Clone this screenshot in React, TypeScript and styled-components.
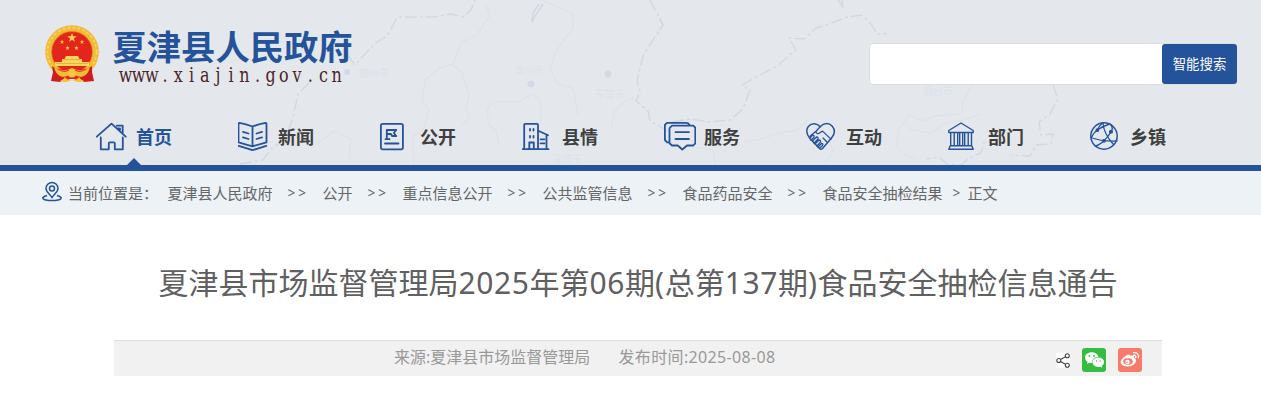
import React from "react"
import styled, { createGlobalStyle } from "styled-components"

const BLUE = "#24539b"

const GlobalStyle = createGlobalStyle`
  * {
    box-sizing: border-box;
  }

  body {
    margin: 0;
    background: #fff;
    color: #666;
    font-family: "Noto Sans", "Noto Sans CJK SC", sans-serif;
  }

  a {
    color: inherit;
    text-decoration: none;
  }
`

const Header = styled.header`
  position: relative;
  height: 171px;
  background: #e4e8ed;
  border-bottom: 6px solid ${BLUE};
`

const MapBackground = styled.svg`
  position: absolute;
  top: 0;
  left: 0;
  width: 1261px;
  height: 165px;
  fill: none;
  stroke: #d2d8e2;
  stroke-width: 1.4;
  stroke-linejoin: round;

  .road {
    stroke: #dde1e7;
    stroke-width: 1.1;
  }

  text,
  circle {
    fill: #d3d9e5;
    stroke: none;
    font-family: "Noto Sans CJK SC", sans-serif;
    font-size: 10px;
  }
`

const TopRow = styled.div`
  position: relative;
  display: flex;
  justify-content: space-between;
  height: 107px;
  padding: 24px 24px 0 44px;
`

const Brand = styled.a`
  display: flex;
  height: 64px;
`

const SiteName = styled.svg`
  width: 250px;
  height: 64px;
  margin-left: 12px;
  overflow: visible;
`

const Search = styled.form`
  display: flex;
  width: 368px;
  height: 42px;
  margin-top: 19px;
  border: 1px solid #dcdcdc;
  border-right: none;
  border-radius: 4px;
  background: #fff;

  input {
    flex: 1;
    min-width: 0;
    border: none;
    border-radius: 4px;
    background: #fff;
    outline: none;
  }

  button {
    width: 75px;
    height: 40px;
    padding: 0 0 2px;
    border: none;
    border-radius: 3px;
    background: ${BLUE};
    color: #fff;
    font-family: "Noto Sans CJK SC", sans-serif;
    font-size: 13.4px;
    cursor: pointer;
  }
`

const Nav = styled.nav`
  position: relative;
  display: grid;
  grid-template-columns: repeat(8, 142px);
  height: 58px;
  padding-left: 96px;
`

const NavItem = styled.a<{ $active?: boolean }>`
  position: relative;
  display: flex;
  align-items: center;
  height: 58px;
  color: ${(p) => (p.$active ? BLUE : "#3f3f3f")};
  font-size: 18px;
  font-weight: bold;

  svg {
    width: 32px;
    height: 32px;
    margin: 0 8px 0 0;
    fill: none;
    stroke: ${BLUE};
    stroke-width: 1.8;
    stroke-linecap: round;
    stroke-linejoin: round;
  }

  &::after {
    display: ${(p) => (p.$active ? "block" : "none")};
    content: "";
    position: absolute;
    left: 31px;
    bottom: 0;
    border: 7px solid transparent;
    border-top: none;
    border-bottom-color: ${BLUE};
  }
`

const Breadcrumb = styled.div`
  display: flex;
  align-items: center;
  height: 44px;
  padding: 0 0 2px 42px;
  background: #edf2f6;
  font-size: 15px;
  white-space: nowrap;

  svg {
    width: 20px;
    height: 22px;
    margin: -1px 6px 0 0;
    fill: none;
    stroke: ${BLUE};
    stroke-width: 1.5;
  }
`

const CrumbLabel = styled.span`
  width: 99.5px;
`

const Separator = styled.span`
  width: 50px;
  padding: 2px 0 0 15px;
  font-size: 13.5px;
  letter-spacing: 3px;
`

const LastSeparator = styled(Separator)`
  width: 25px;
  padding-left: 10px;
`

const Article = styled.main`
  width: 1048px;
  margin: 0 0 0 114px;
`

const Title = styled.h1`
  margin: 0;
  padding-top: 46px;
  height: 125px;
  color: #606060;
  font-size: 30px;
  font-weight: normal;
  line-height: 44px;
  text-align: center;
  white-space: nowrap;
`

const Digits = styled.span`
  letter-spacing: 0.6px;
`

const InfoBar = styled.div`
  display: flex;
  align-items: center;
  height: 36px;
  padding: 0 20px 0 280px;
  border-top: 1px solid #dcdcdc;
  background: #f1f1f1;
  color: #999;
  font-size: 16px;
  white-space: nowrap;
`

const Source = styled.span`
  width: 224.5px;
  padding-bottom: 5px;
`

const PublishDate = styled.span`
  padding-bottom: 5px;
  letter-spacing: 0.35px;
`

const Share = styled.div`
  display: flex;
  align-items: center;
  margin-left: auto;
  padding-top: 3px;
`

const ShareMark = styled.svg`
  width: 14px;
  height: 15px;
  margin-right: 12px;
  background: #fff;
  fill: none;
  stroke: #444;
  stroke-width: 1.1;
`

const ShareButton = styled.a<{ $color: string }>`
  width: 24px;
  height: 24px;
  border-radius: 3px;
  background: ${(p) => p.$color};

  & + & {
    margin-left: 12px;
  }

  svg {
    display: block;
    width: 24px;
    height: 24px;
  }
`

const Star = ({ x, y, r }: { x: number; y: number; r: number }) => (
  <path
    transform={`translate(${x} ${y}) scale(${r})`}
    fill="#f8d24a"
    d="M0-1 .24-.32.95-.31.38.12.59.81 0 .4-.59.81-.38.12-.95-.31-.24-.32z"
  />
)

const Emblem = () => (
  <svg width="57" height="62" viewBox="0 0 57 62">
    <circle cx="28" cy="28" r="23.6" fill="#e3251b" stroke="#f0bb39" strokeWidth="6.4" />
    <circle cx="28" cy="28" r="24.5" fill="none" stroke="#f8d55c" strokeWidth="1.6" strokeDasharray="3 2" />
    <circle cx="28" cy="28" r="20.4" fill="none" stroke="#d68b21" strokeWidth=".6" />
    <Star x={28} y={13.8} r={5} />
    <Star x={18} y={18} r={2.4} />
    <Star x={38} y={18} r={2.4} />
    <Star x={23.5} y={24} r={2.4} />
    <Star x={32.5} y={24} r={2.4} />
    <path d="M22 32h12l1.500 3H38v3h7v4H11v-4h7v-3h2.500z" fill="#f7d65c" />
    <path d="M20 35.500h16M12 39.500h32" stroke="#dda033" strokeWidth=".7" />
    <path d="M8 42q6 5 20 3 14 2 20-3v6l2 9-10 1-4-3H20l-4 3-9-1 2-9z" fill="#cf1d1b" />
    <path d="M10 43q8 6 18 1 10 5 18-1-2 9-9 10-5 0-9-3-4 3-9 3-7-1-9-10z" fill="#f0bb39" />
    <path d="M14 45q6 4 11 1M42 45q-6 4-11 1" fill="none" stroke="#e0421f" strokeWidth="1.2" />
    <path d="M19 57l4-5 5-2 5 2 4 5-5-1-4-2-4 2z" fill="#e9251d" />
    <circle cx="28" cy="49.5" r="4" fill="#f6c842" />
    <path d="M16 57c4-2 4-3 5-4 1 2 3 3 7 3s6-1 7-3c1 1 1 2 5 4-4 2-8 1-12-1-4 2-8 3-12 1z" fill="#f4c23e" />
  </svg>
)

const HeaderMap = () => (
  <MapBackground viewBox="0 0 1261 165">
    <g strokeDasharray="12 3 3 3">
      <path d="M240 164l23-4 7-10 15-11 8-21 5-24 14-14" />
      <path d="M348 55l7 10 10-11 12-12 10-6 9-16 4-3 33 0 18-3 12 3 8-7 4-10" />
      <path d="M650 0l7 13 6 12-8 12-12 19-6 25 3 10-4 10 12 10 2 10 18 10" />
      <path d="M672 122l18-3 19 3 21-2 13-11 7-19-8-5 35-19 19-16-7-12 15 1 12-11 13-4 18-7 15-2 9 9 6 10 10 0" />
      <path d="M1053 85l5 14-8 15-11 8 2 13 12-1-2 10-15 1-6 11-19-1" />
      <path d="M1000 138l-16 5-3 10-12 5-8 7-14-1-8-7-12 2" />
    </g>
    <path d="M539 4l-6 9-1 9 3-6 8-12M842 0l1 7-5-7M660 20l3 5-3 5" />
    <g className="road">
      <path d="M486 5l4 10-13 20-15 7-9 22-13 4-15 12-3 20 7 10-5 18-12 10 2 28M453 65l9 7 7 22-3 16 4 8-8 6M542 0l20 9 11 5 0 15-7 8-10 15-6 17 8 15 15 4 5 27M533 94l-16 8-25 0-5 9 2 14 7 5 3 15M533 94l8 8 0 20M611 130l3-18 13-13 13 0M316 145l18-14 17 8-2 20" />
      <path d="M715 164l-2-14-20-3M744 142l20-4 15-5 18-3 10-9M825 164l8-12-5-14M972 85l-9 17-1 12-27 2-12 5-14-6-10 14-3 16 9 10 12 4M909 129l22 4 12-9 20-4 17-6" />
    </g>
    <circle cx="347" cy="72" r="3" />
    <circle cx="531" cy="84" r="3.5" />
    <circle cx="608" cy="74" r="3.5" />
    <text x="359" y="77" opacity=".5">德州市</text>
    <text x="514" y="74" opacity=".4">滨州市</text>
    <text x="595" y="98" opacity=".4">东营市</text>
    <text x="552" y="163" opacity=".4">淄博市</text>
    <text x="923" y="95" opacity=".4">烟台市</text>
  </MapBackground>
)

const navItems = [
  {
    label: "首页",
    icon: (
      <path d="M.8 16.7 15.5 3.7l14.2 13M20.7 5.7h6V13M22 8.5h2V10M4.8 17.5v11.8h8v-6q0-1 1-1h4q1 0 1 1v6h8V17.5" />
    ),
  },
  {
    label: "新闻",
    icon: (
      <>
        <path d="M14.5 6.5Q8 4 1.5 2.8q-1 0-1 1v18.5l14 4 14-4V3.8q0-1-1-1Q21 4 14.5 6.5zM14.5 6.5v19.8M.7 25.8l13.8 4.4 13.8-4.4" />
        <path d="M5 11.8l5.5 1.7M5 17.3l5.5 1.7M24 11.8l-5.5 1.7M24 17.3l-5.5 1.7" />
      </>
    ),
  },
  {
    label: "公开",
    icon: (
      <>
        <rect x=".9" y="3.8" width="22" height="25.6" rx="1.8" />
        <path d="M6.8 19V10h9.500l-2.500 3 2.500 3H12l-1-2H7M5.500 19.200h4M5 23.500h13.500" />
      </>
    ),
  },
  {
    label: "县情",
    icon: (
      <>
        <path d="M.7 29.200h25.800M2.200 29V4.800q0-1 1-1H15q1 0 1 1V29M16.200 10.700 26 15.200M24.500 15v14M7.300 29v-6.500h4.500V29" />
        <path d="M8 9v1.500M11.500 9v1.500M8 16v1.500M11.500 16v1.500M18.500 19.300h4M18.500 23.300h4" />
      </>
    ),
  },
  {
    label: "服务",
    icon: (
      <>
        <path d="M5 22.300H3.200L.9 20V4.800l2-2H22q2.500 0 3.500 2" />
        <path d="M8 5.700h21.300l2 2v15.600l-2 2.200H23L18.300 29.500l-4.600-4H8l-2.500-2.200V8.200zM11.500 12.200H25M11.500 19H25" />
      </>
    ),
  },
  {
    label: "互动",
    icon: (
      <>
        <path d="M4 18.500C0 14 0 9 2.500 6.200 6 2.500 11 3 14.200 6.800 18 2.500 23 2.500 26.300 6.200 29.500 10 28.500 14.500 25.500 18l-9 10.500q-1.500 1.500-3 0z" strokeWidth="1.5" />
        <path d="M14.200 6.800 10 11.300q0 3 3 2l3.500-2.200 8.500 8M10 11.300l-6 5M3.500 18.200l3-3q2 0 1.500 2l-3.200 3M6.500 21l4-4q2 0 1.500 2l-4 4.200M9 24l4-4q2 0 1.500 2L11 26M12 27l3.500-3.500q2 0 1 2L13.800 28M17 18l4 4" strokeWidth="1.3" />
      </>
    ),
  },
  {
    label: "部门",
    icon: (
      <path
        strokeWidth="1.4"
        d="M.8 10.500 13 3l12.200 7.500v2H.8zM2.700 12.500v13.200M6.200 12.500v13.200M9.700 12.500v13.200M11.700 12.500v13.200M14.700 12.500v13.200M16.700 12.500v13.200M20.200 12.500v13.200M23.500 12.500v13.200M2.200 25.800h21.600l1.400 3.500H.8z"
      />
    ),
  },
  {
    label: "乡镇",
    icon: (
      <>
        <circle cx="14" cy="16" r="13.2" strokeWidth="1.5" />
        <g strokeWidth="1.3">
          <path d="M12.500 3Q9 6 7.300 10 3 13 1.300 18M7.300 10Q13 6 18.500 4.500M13 3.200Q14 14 23.500 24.500M20 4q4 4 1 7.500Q19 16 14 20.800T5 26M1 17.500q10 4 26 3.500" />
          <g fill={BLUE}>
            <circle cx="7.3" cy="10.2" r="1.2" />
            <circle cx="21" cy="11.7" r="1.4" />
            <circle cx="14" cy="20.8" r="1.2" />
          </g>
        </g>
      </>
    ),
  },
]

const crumbs = [
  "夏津县人民政府",
  "公开",
  "重点信息公开",
  "公共监管信息",
  "食品药品安全",
  "食品安全抽检结果",
]

// The domain is set on a fixed pitch, every letter centred in its cell
const DOMAIN = "www.xiajin.gov.cn"
const LETTER_PITCH = 13.2
const LETTER_SCALE = 0.78
const domainX = DOMAIN.split("")
  .map((_, i) => ((12.5 + i * LETTER_PITCH) / LETTER_SCALE).toFixed(2))
  .join(" ")

const App = () => {
  const [keyword, setKeyword] = React.useState("")
  return (
    <>
      <GlobalStyle />
      <Header>
        <HeaderMap />
        <TopRow>
          <Brand href="#">
            <Emblem />
            <SiteName viewBox="0 0 250 64">
              <text x="-.5" y="36" fill={BLUE} fontFamily="Noto Sans CJK SC" fontSize="34.3" fontWeight="bold">
                夏津县人民政府
              </text>
              <text
                x={domainX}
                y="58"
                transform={`scale(${LETTER_SCALE} 1)`}
                textAnchor="middle"
                fill="#4b2427"
                fontFamily="DejaVu Serif"
                fontSize="20.5"
              >
                {DOMAIN}
              </text>
            </SiteName>
          </Brand>
          <Search onSubmit={(e) => e.preventDefault()}>
            <input
              type="text"
              value={keyword}
              onChange={(e: React.ChangeEvent<HTMLInputElement>) =>
                setKeyword(e.target.value)
              }
            />
            <button type="submit">智能搜索</button>
          </Search>
        </TopRow>
        <Nav>
          {navItems.map((item, i) => (
            <NavItem key={item.label} href="#" $active={i === 0}>
              <svg viewBox="0 0 32 32">{item.icon}</svg>
              {item.label}
            </NavItem>
          ))}
        </Nav>
      </Header>
      <Breadcrumb>
        <svg viewBox="0 0 20 22">
          <path d="M10 16.500C6.500 12 4 10.500 4 7.500a6 6 0 0 1 12 0c0 3-2.500 4.500-6 9z" />
          <circle cx="10" cy="7.5" r="2.5" />
          <path d="M5 14.500C-2 16.500 0 19.500 10 19.500s12-3 5-5" />
        </svg>
        <CrumbLabel>当前位置是：</CrumbLabel>
        {crumbs.map((crumb, i) => (
          <React.Fragment key={crumb}>
            {i > 0 && <Separator>&gt;&gt;</Separator>}
            <a href="#">{crumb}</a>
          </React.Fragment>
        ))}
        <LastSeparator>&gt;</LastSeparator>
        <span>正文</span>
      </Breadcrumb>
      <Article>
        <Title>
          夏津县市场监督管理局<Digits>2025</Digits>年第<Digits>06</Digits>期
          <Digits>(</Digits>总第<Digits>137</Digits>期<Digits>)</Digits>
          食品安全抽检信息通告
        </Title>
        <InfoBar>
          <Source>来源:夏津县市场监督管理局</Source>
          <PublishDate>发布时间:2025-08-08</PublishDate>
          <Share>
            <ShareMark viewBox="0 0 14 15">
              <circle cx="2.8" cy="7.5" r="2" />
              <circle cx="11.3" cy="2.8" r="2" />
              <circle cx="11.3" cy="12.3" r="2" />
              <path d="M4.500 6.500 9.500 3.800M4.500 8.500l5 2.800" />
            </ShareMark>
            <ShareButton $color="#35bd42" href="#">
              <svg viewBox="0 0 24 24" fill="#fff">
                <path d="M9.800 4.200C6 4.200 3 6.500 3 9.600c0 1.800 1 3.300 2.600 4.300L5 16l2.500-1.300c.9.300 1.900.4 2.800.3-.6-3.400 2.200-6.200 6.200-6.200C15.800 6 13 4.200 9.800 4.200z" />
                <path d="M16.300 9.600c-3.200 0-5.700 2-5.700 4.700s2.500 4.700 5.700 4.700c.7 0 1.400-.1 2-.3l2 1.100-.5-1.800c1.400-.9 2.200-2.200 2.200-3.700 0-2.700-2.500-4.700-5.700-4.700z" />
                <g fill="#35bd42">
                  <circle cx="7.5" cy="8" r=".9" />
                  <circle cx="12" cy="8" r=".9" />
                  <circle cx="14.5" cy="13" r=".7" />
                  <circle cx="18.2" cy="13" r=".7" />
                </g>
              </svg>
            </ShareButton>
            <ShareButton $color="#f67b6b" href="#">
              <svg viewBox="0 0 24 24" fill="none" stroke="#fff">
                <path d="M10 7.500c1-1 2-.8 2 1 2-.9 4-.8 3.500 1.200 4 1.400 2.200 8.300-6 8.300-7.500 0-8-5-3.500-8.500C8 8 9.500 6.700 10 7.500z" fill="#fff" />
                <ellipse cx="10" cy="13.5" rx="4.8" ry="3.3" fill="#f67b6b" stroke="none" />
                <circle cx="9.5" cy="14" r="2.2" fill="#fff" stroke="none" />
                <circle cx="9" cy="14.3" r=".8" fill="#f67b6b" stroke="none" />
                <path d="M15.500 4.700c3.500-.7 5.700 2 4.800 5M15.500 7.300c1.700-.3 2.600.8 2.200 2.300" strokeWidth="1.3" strokeLinecap="round" />
              </svg>
            </ShareButton>
          </Share>
        </InfoBar>
      </Article>
    </>
  )
}

export default App
